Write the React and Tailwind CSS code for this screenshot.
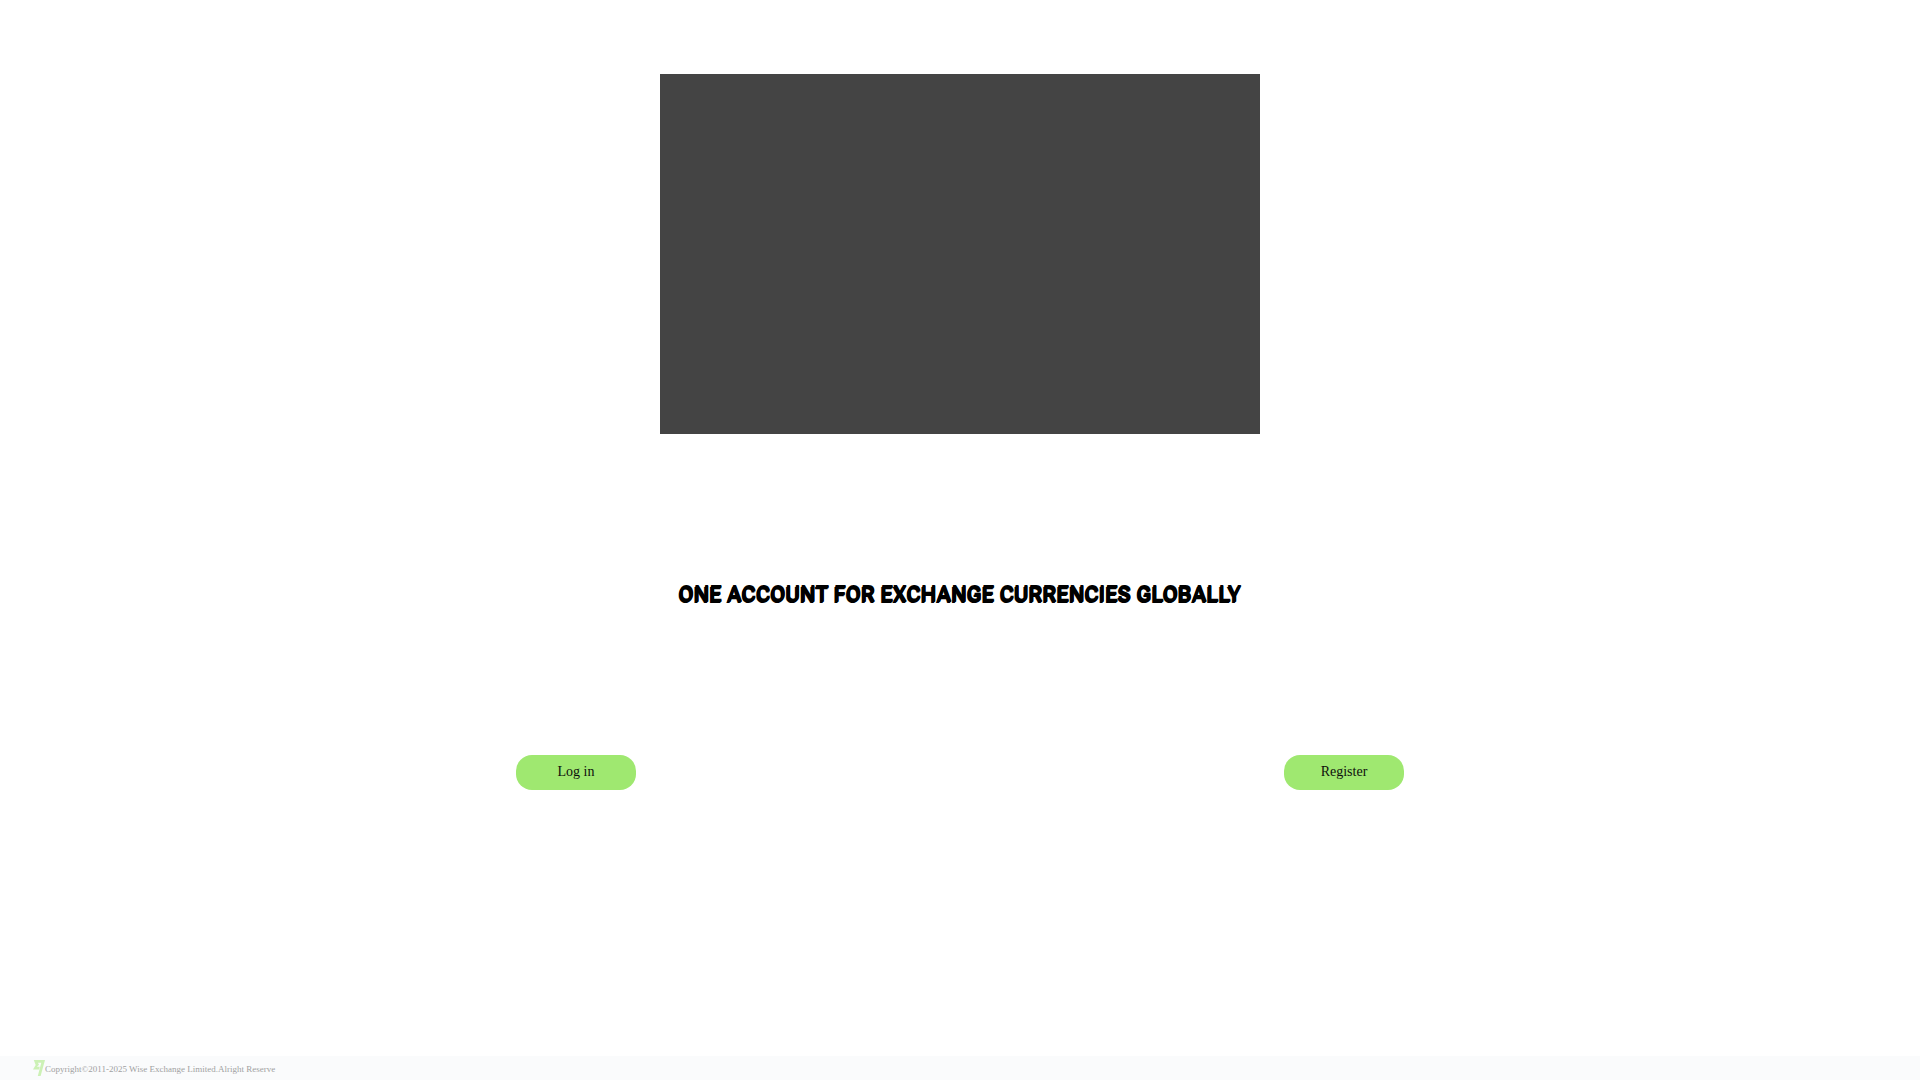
const actions = [
  { label: 'Log in', href: '#login' },
  { label: 'Register', href: '#register' },
];

function FlagLogo() {
  return (
    <svg className="h-4 w-3 shrink-0" viewBox="0 0 12 16" fill="#9fe870" aria-hidden="true">
      <path d="M0.8 0H12L7.6 16H4.8L8.3 2.8H4.9L6 4.7L3.9 6.8H6.8L6.1 9.6H0L2.7 4.9Z" />
    </svg>
  );
}

function ActionLink({ label, href }) {
  return (
    <a
      href={href}
      className="flex h-[35px] w-[120px] items-center justify-center rounded-2xl bg-[#9fe870] pb-px text-sm text-[#0e0f0c]"
    >
      {label}
    </a>
  );
}

export default function App() {
  return (
    <div className="flex min-h-screen flex-col bg-white font-['Liberation_Serif',serif]">
      <main className="flex grow flex-col items-center pt-[74px]">
        <div className="aspect-5/3 w-[600px] max-w-full bg-[#444444]" />
        <h1 className="mt-[142px] text-center font-[Roboto,sans-serif] text-[22px] leading-9 font-semibold text-black uppercase [text-shadow:0_1px_0_#000,-1px_2px_0_#000]">
          One account for exchange currencies globally
        </h1>
        <nav className="mt-[143px] flex w-4/5 justify-around">
          {actions.map((a) => (
            <ActionLink key={a.label} label={a.label} href={a.href} />
          ))}
        </nav>
      </main>
      <footer className="flex h-6 items-center bg-[#fafbfc] px-[33px]">
        <div className="flex items-center opacity-50">
          <FlagLogo />
          <span className="pt-px text-[9px] leading-4 text-[#444444]">
            Copyright©2011-2025 Wise Exchange Limited.Alright Reserve
          </span>
        </div>
      </footer>
    </div>
  );
}
